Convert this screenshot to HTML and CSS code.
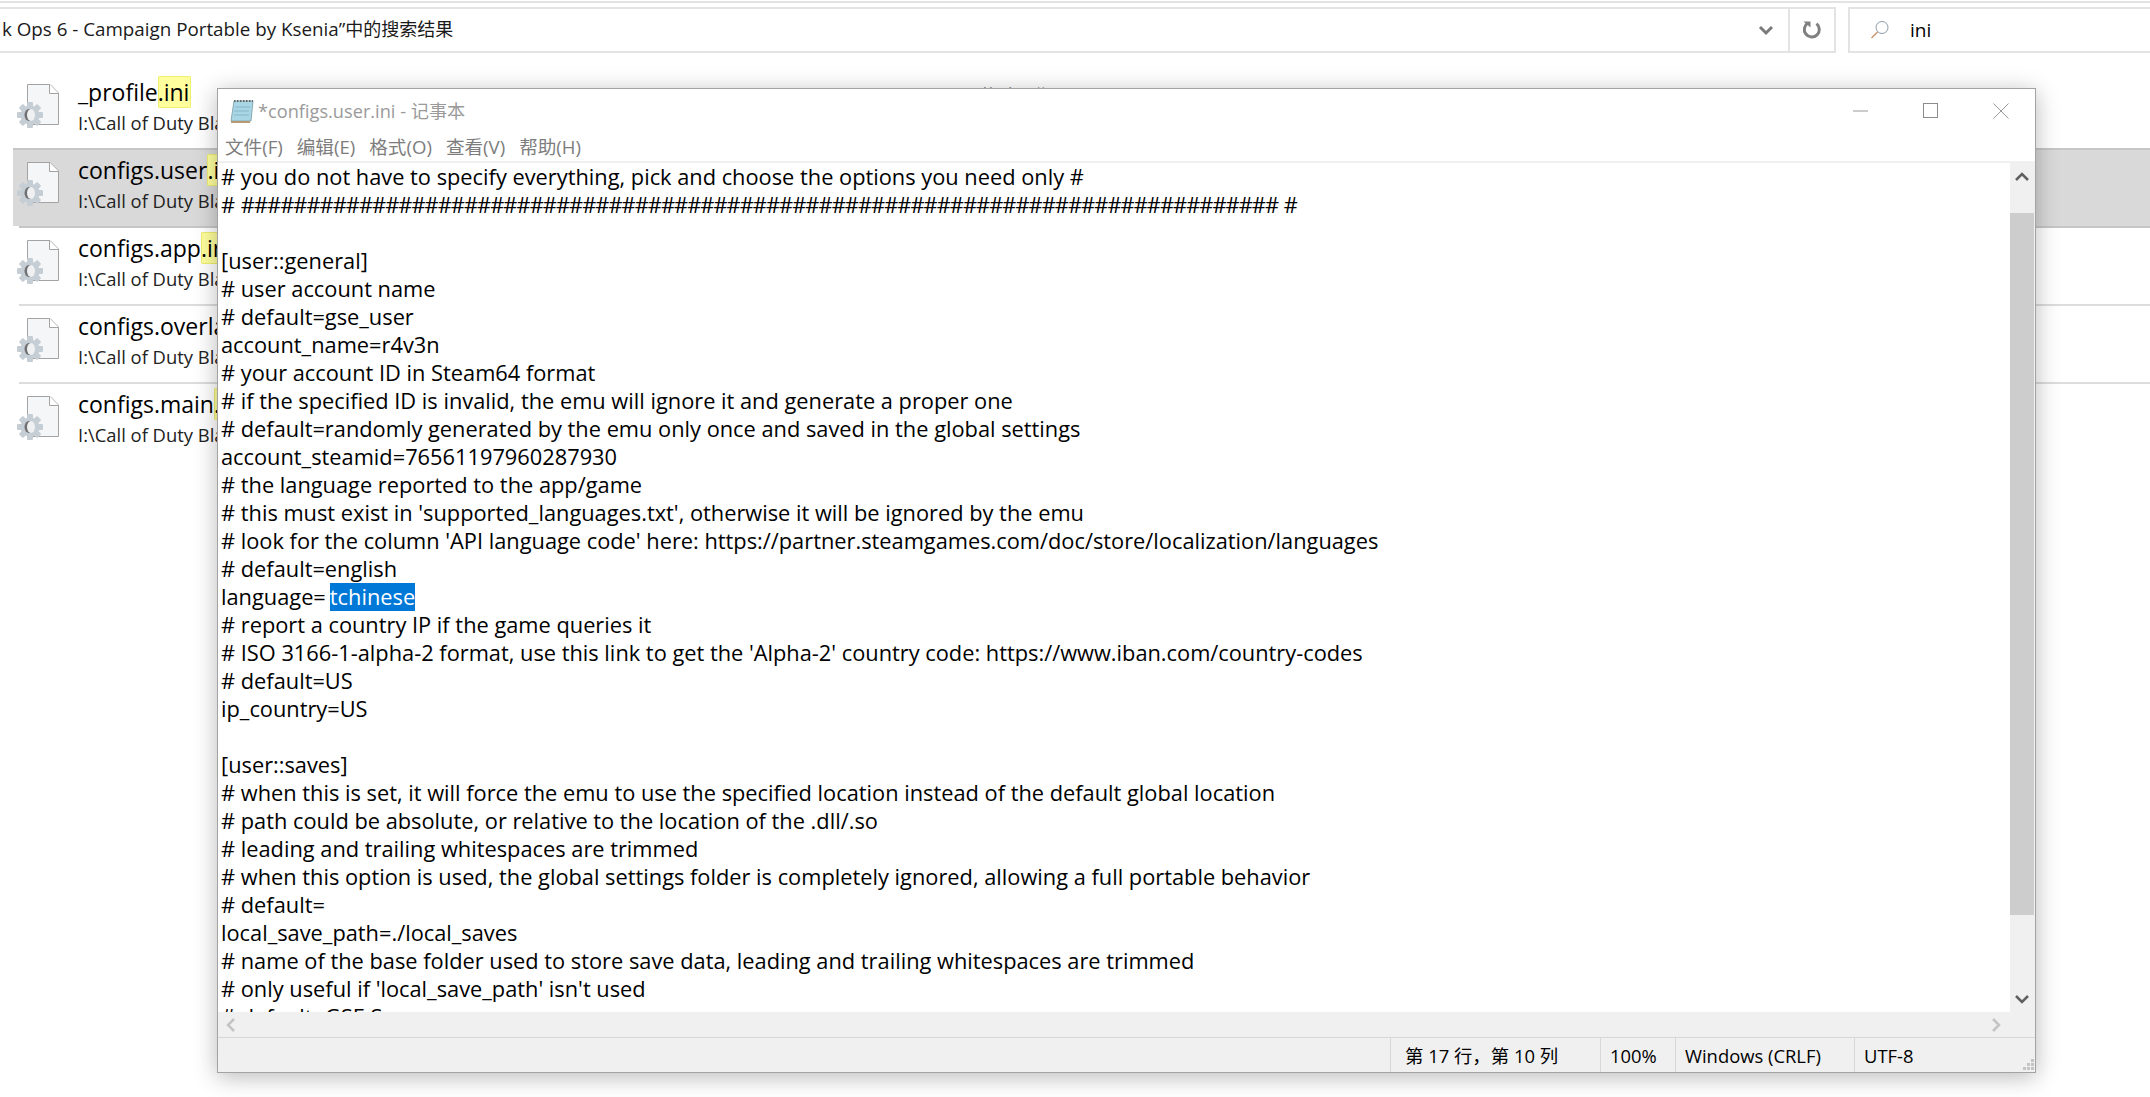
FILE: index.html
```html
<!DOCTYPE html>
<html lang="zh">
<head>
<meta charset="utf-8">
<title>configs.user.ini - 记事本</title>
<link rel="stylesheet" href="styles.css">
</head>
<body>
<svg class="defs" width="0" height="0" aria-hidden="true">
  <defs>
    <symbol id="ini-icon" viewBox="0 0 48 48">
      <path d="M13.500 3.500H36L44.500 12V43.500H13.500Z" fill="#f5f6f7" stroke="#a3a3a3"/>
      <path d="M35.500 3.500V12.500H44.500" fill="#fff" stroke="#a3a3a3"/>
      <g transform="translate(16 34)">
        <circle r="9.500" fill="#c6ced5"/>
        <g fill="#c6ced5">
          <rect x="-3" y="-13" width="6" height="26" rx="1"/>
          <rect x="-3" y="-13" width="6" height="26" rx="1" transform="rotate(45)"/>
          <rect x="-3" y="-13" width="6" height="26" rx="1" transform="rotate(90)"/>
          <rect x="-3" y="-13" width="6" height="26" rx="1" transform="rotate(135)"/>
        </g>
        <ellipse cx="-1" cy="0" rx="4.500" ry="6" fill="#707070"/>
        <ellipse cx="1" cy="0" rx="4" ry="6" fill="#eef0f2"/>
      </g>
    </symbol>
  </defs>
</svg>

<div class="explorer">
  <div class="top-rule"></div>
  <div class="toolbar">
    <div class="address">
      <div class="address-text">k Ops 6 - Campaign Portable by Ksenia”<span class="cjk">中的搜索结果</span></div>
      <svg class="chevron" width="16" height="12" viewBox="0 0 16 12"><path d="M2 3l6 6 6-6" fill="none" stroke="#7a7a7a" stroke-width="3"/></svg>
      <div class="refresh">
        <svg width="20" height="20" viewBox="0 0 20 20"><path d="M6 3A7.500 7.500 0 1 0 14.500 3.600" fill="none" stroke="#808080" stroke-width="3"/><path d="M1.500 1.500h7v6z" fill="#808080"/></svg>
      </div>
    </div>
    <div class="search">
      <svg width="20" height="20" viewBox="0 0 20 20"><circle cx="12" cy="7.500" r="6" fill="none" stroke="#8a9aa8"/><path d="M7.500 12L1.500 18" stroke="#c9956a" stroke-width="1.400"/></svg>
      <span class="search-text">ini</span>
    </div>
  </div>

  <div class="results">
    <div class="result first">
      <svg class="file-icon"><use href="#ini-icon"/></svg>
      <div class="result-text">
        <div class="name">_profile<mark>.ini</mark></div>
        <div class="path">I:\Call of Duty Black Ops 6</div>
      </div>
      <div class="modified">修改日期: 2025/9/10 9:36</div>
    </div>
    <div class="result selected">
      <svg class="file-icon"><use href="#ini-icon"/></svg>
      <div class="result-text">
        <div class="name">configs.user<mark>.ini</mark></div>
        <div class="path">I:\Call of Duty Black Ops 6</div>
      </div>
    </div>
    <div class="result">
      <svg class="file-icon"><use href="#ini-icon"/></svg>
      <div class="result-text">
        <div class="name">configs.app<mark>.ini</mark></div>
        <div class="path">I:\Call of Duty Black Ops 6</div>
      </div>
    </div>
    <div class="result">
      <svg class="file-icon"><use href="#ini-icon"/></svg>
      <div class="result-text">
        <div class="name">configs.overlay<mark>.ini</mark></div>
        <div class="path">I:\Call of Duty Black Ops 6</div>
      </div>
    </div>
    <div class="result">
      <svg class="file-icon"><use href="#ini-icon"/></svg>
      <div class="result-text">
        <div class="name">configs.main<mark>.ini</mark></div>
        <div class="path">I:\Call of Duty Black Ops 6</div>
      </div>
    </div>
  </div>
</div>

<section class="notepad">
  <header class="titlebar">
    <svg class="np-icon" width="26" height="26" viewBox="0 0 26 26"><path d="M5 3h19l-2 20H2z" fill="#a9d6e4" stroke="#8aa9b4"/><path d="M2 24h19" stroke="#b59a74" stroke-width="2"/><path d="M5 3h19" stroke="#666" stroke-width="2" stroke-dasharray="1.500 1.500"/><path d="M6 9h15M5 13h15M5 17h15" stroke="#86b6c8"/></svg>
    <span class="title">*configs.user.ini - 记事本</span>
    <div class="winctl">
      <svg width="16" height="16" viewBox="0 0 16 16"><path d="M0 8h15" stroke="#999"/></svg>
      <svg width="16" height="16" viewBox="0 0 16 16"><rect x=".5" y=".5" width="14" height="14" fill="none" stroke="#8c8c8c"/></svg>
      <svg width="16" height="16" viewBox="0 0 16 16"><path d="M.5.5l15 15M15.500.5l-15 15" stroke="#999"/></svg>
    </div>
  </header>
  <nav class="menubar">
    <span>文件(F)</span><span>编辑(E)</span><span>格式(O)</span><span>查看(V)</span><span>帮助(H)</span>
  </nav>
  <div class="editor-area">
    <div class="editor">
      <div class="line"># you do not have to specify everything, pick and choose the options you need only #</div>
      <div class="line"># <span class="hashes">###############################################################################</span> #</div>
      <div class="line">&nbsp;</div>
      <div class="line">[user::general]</div>
      <div class="line"># user account name</div>
      <div class="line"># default=gse_user</div>
      <div class="line">account_name=r4v3n</div>
      <div class="line"># your account ID in Steam64 format</div>
      <div class="line"># if the specified ID is invalid, the emu will ignore it and generate a proper one</div>
      <div class="line"># default=randomly generated by the emu only once and saved in the global settings</div>
      <div class="line">account_steamid=76561197960287930</div>
      <div class="line"># the language reported to the app/game</div>
      <div class="line"># this must exist in 'supported_languages.txt', otherwise it will be ignored by the emu</div>
      <div class="line"># look for the column 'API language code' here: https://partner.steamgames.com/doc/store/localization/languages</div>
      <div class="line"># default=english</div>
      <div class="line">language=<span class="sel">tchinese</span></div>
      <div class="line"># report a country IP if the game queries it</div>
      <div class="line"># ISO 3166-1-alpha-2 format, use this link to get the 'Alpha-2' country code: https://www.iban.com/country-codes</div>
      <div class="line"># default=US</div>
      <div class="line">ip_country=US</div>
      <div class="line">&nbsp;</div>
      <div class="line">[user::saves]</div>
      <div class="line"># when this is set, it will force the emu to use the specified location instead of the default global location</div>
      <div class="line"># path could be absolute, or relative to the location of the .dll/.so</div>
      <div class="line"># leading and trailing whitespaces are trimmed</div>
      <div class="line"># when this option is used, the global settings folder is completely ignored, allowing a full portable behavior</div>
      <div class="line"># default=</div>
      <div class="line">local_save_path=./local_saves</div>
      <div class="line"># name of the base folder used to store save data, leading and trailing whitespaces are trimmed</div>
      <div class="line"># only useful if 'local_save_path' isn't used</div>
      <div class="line"># default=GSE Saves</div>
    </div>
    <div class="vscroll">
      <svg class="arrow-up" width="14" height="10" viewBox="0 0 14 10"><path d="M1 8l6-6 6 6" fill="none" stroke="#606060" stroke-width="2.500"/></svg>
      <div class="thumb"></div>
      <svg class="arrow-down" width="14" height="10" viewBox="0 0 14 10"><path d="M1 2l6 6 6-6" fill="none" stroke="#606060" stroke-width="2.500"/></svg>
    </div>
    <div class="hscroll">
      <svg width="10" height="14" viewBox="0 0 10 14"><path d="M8 1L2 7l6 6" fill="none" stroke="#c4c4c4" stroke-width="2.500"/></svg>
      <svg width="10" height="14" viewBox="0 0 10 14"><path d="M2 1l6 6-6 6" fill="none" stroke="#c4c4c4" stroke-width="2.500"/></svg>
    </div>
  </div>
  <footer class="statusbar">
    <div class="cell pos">第 17 行，第 10 列</div>
    <div class="cell zoom">100%</div>
    <div class="cell eol">Windows (CRLF)</div>
    <div class="cell enc">UTF-8</div>
    <svg class="grip" width="12" height="12" viewBox="0 0 12 12"><path d="M8 0h3v3H8zM4 4h3v3H4zM8 4h3v3H8zM0 8h3v3H0zM4 8h3v3H4zM8 8h3v3H8z" fill="#c4c4c4"/></svg>
  </footer>
</section>
</body>
</html>
```

FILE: styles.css
```css
* { box-sizing: border-box; }
html, body { margin: 0; padding: 0; width: 2150px; height: 1097px; overflow: hidden; background: #fff; }
body { font-family: "Open Sans", "Noto Sans CJK SC", sans-serif; color: #000; position: relative; }
.defs { position: absolute; }

.top-rule { height: 2px; margin-top: 1px; background: #e3e3e3; }
.toolbar { display: flex; margin-top: 4px; height: 46px; gap: 12px; }
.address { width: 1840px; margin-left: -4px; display: flex; align-items: center; border: 2px solid #e3e3e3; }
.address-text { flex: 1; font-size: 18.8px; line-height: 24px; padding: 0 0 2px 4px; white-space: nowrap; color: #1a1a1a; }
.cjk { font-size: 18px; }
.chevron { margin-right: 14px; }
.refresh { width: 46px; height: 100%; border-left: 2px solid #e3e3e3; display: flex; align-items: center; justify-content: center; }
.search { flex: 1; display: flex; align-items: center; border: 2px solid #e3e3e3; border-right: 0; padding-left: 20px; gap: 20px; }
.search-text { font-size: 19px; }

.results { margin-top: 17px; padding-left: 19px; }
.result { display: flex; height: 78px; border-top: 2px solid #dcdcdc; }
.result.first { border-top-color: transparent; }
.result.selected { background: #d9d9d9; margin-left: -6px; padding-left: 6px; border-top-color: #c6c6c6; }
.result.selected + .result { border-top-color: #c6c6c6; }
.file-icon { width: 48px; height: 48px; margin: 9px 0 0 -5px; flex: none; }
.result-text { margin-left: 16px; padding-top: 1px; width: 902px; flex: none; }
.name { font-size: 23px; line-height: 38px; white-space: nowrap; }
mark { background: #ffff9e; box-shadow: inset 0 0 0 1px #efef70; border-radius: 2px; padding: 0 2px 0 0; margin-right: -2px; color: inherit; }
.path { font-size: 18.4px; line-height: 23px; white-space: nowrap; color: #222; }
.modified { margin-top: 10px; font-size: 18.5px; color: #444; white-space: nowrap; }

.notepad { position: absolute; left: 217px; top: 88px; width: 1819px; height: 985px; background: #fff; border: 1px solid #a3a3a3; box-shadow: 0 4px 22px rgba(0,0,0,.28); display: flex; flex-direction: column; }
.titlebar { height: 43px; display: flex; align-items: center; padding-left: 11px; flex: none; }
.np-icon { flex: none; }
.title { margin-left: 3px; padding-bottom: 2px; font-size: 18.2px; color: #9a9a9a; white-space: nowrap; }
.winctl { margin-left: auto; display: flex; gap: 54px; padding-right: 26px; align-items: center; }
.menubar { height: 31px; display: flex; gap: 14px; padding: 0 0 2px 7px; font-size: 18.6px; color: #7d7d7d; align-items: center; flex: none; border-bottom: 2px solid #f0f0f0; }

.editor-area { flex: 1; display: grid; grid-template-columns: minmax(0, 1fr) 25px; grid-template-rows: minmax(0, 1fr) 25px; min-height: 0; }
.editor { overflow: hidden; padding-left: 3px; font-size: 21.8px; line-height: 28px; }
.line { height: 28px; white-space: pre; }
.hashes { letter-spacing: -0.95px; }
.sel { display: inline-block; margin-left: 4px; background: #0078d7; color: #fff; }
.vscroll { background: #f0f0f0; display: flex; flex-direction: column; align-items: center; padding-right: 1px; min-height: 0; }
.arrow-up { margin-top: 9px; flex: none; }
.arrow-down { margin-bottom: 8px; flex: none; }
.thumb { flex: 1; width: 24px; background: #cdcdcd; margin: 31px 0 79px 0; align-self: flex-start; }
.hscroll { grid-column: 1 / span 2; background: #f0f0f0; display: flex; justify-content: space-between; align-items: center; padding: 0 34px 0 8px; }

.statusbar { height: 35px; flex: none; display: flex; position: relative; background: #f0f0f0; border-top: 1px solid #d8d8d8; font-size: 18.4px; padding-left: 1172px; align-items: center; }
.cell { height: 100%; border-left: 1px solid #d8d8d8; padding-left: 9px; white-space: nowrap; display: flex; align-items: center; }
.pos { width: 210px; padding-left: 14px; }
.zoom { width: 75px; }
.eol { width: 179px; }
.grip { position: absolute; right: 0; bottom: 1px; }
```
